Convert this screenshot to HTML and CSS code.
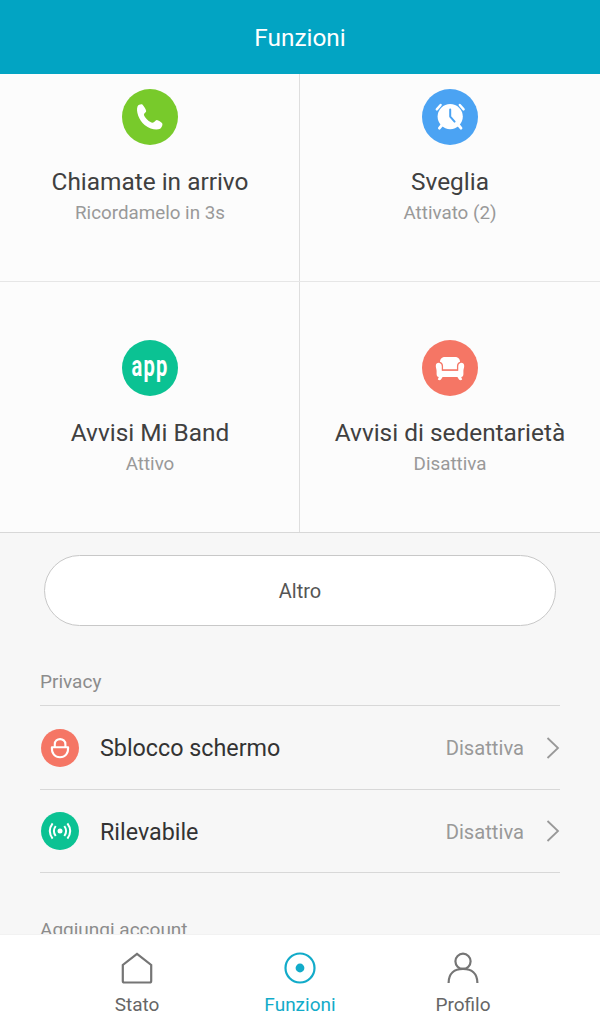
FILE: index.html
```html
<!DOCTYPE html>
<html lang="it">
<head>
    <meta charset="UTF-8">
    <meta name="viewport" content="width=device-width, initial-scale=1.0">
    <title>Funzioni</title>
    <link rel="stylesheet" href="styles.css">
</head>
<body>

    <header class="header">Funzioni</header>

    <main class="content">
        <div class="grid">
            <div class="cell cell-top">
                <svg class="cell-icon" viewBox="0 0 56 56">
                    <circle cx="28" cy="28" r="28" fill="#78ca2b"/>
                    <path d="M15.6 17.2 C16.6 15.6 19.6 14.8 20.6 15.8 C22.2 17.6 23.6 19.8 24.2 22 C24.3 23.2 21.8 24.4 21.9 25.8 C22.7 29 27.5 33.4 30.7 33.8 C32.2 33.8 33.3 31 34.8 31 C36.6 31.4 39 33 40.2 34.3 C41 35.6 39.8 38.8 38.2 39.7 C34.6 41.5 28.2 40.3 22.6 35.9 C17 31.1 13.6 22.1 15.6 17.2 Z" fill="#fff"/>
                </svg>
                <div class="cell-title">Chiamate in arrivo</div>
                <div class="cell-status">Ricordamelo in 3s</div>
            </div>
            <div class="cell cell-top">
                <svg class="cell-icon" viewBox="0 0 56 56">
                    <circle cx="28" cy="28" r="28" fill="#4ba3f3"/>
                    <g fill="none" stroke="#fff" stroke-linecap="round">
                        <path d="M14.8 20.4 L18.6 16 M41.6 20.4 L37.8 16" stroke-width="2.4"/>
                        <path d="M20 36 L17.4 39.2 M36.4 36 L39 39.2" stroke-width="2.8"/>
                    </g>
                    <circle cx="28.2" cy="27.6" r="12.6" fill="#fff"/>
                    <path d="M28.2 20.4 V27.6 L32.6 32.6" fill="none" stroke="#4ba3f3" stroke-width="2" stroke-linecap="round" stroke-linejoin="round"/>
                </svg>
                <div class="cell-title">Sveglia</div>
                <div class="cell-status">Attivato (2)</div>
            </div>
            <div class="cell">
                <svg class="cell-icon" viewBox="0 0 56 56">
                    <circle cx="28" cy="28" r="28" fill="#0bc293"/>
                    <text class="app-label" transform="translate(9.6 36) scale(0.67 1)">app</text>
                </svg>
                <div class="cell-title">Avvisi Mi Band</div>
                <div class="cell-status">Attivo</div>
            </div>
            <div class="cell">
                <svg class="cell-icon" viewBox="0 0 56 56">
                    <circle cx="28" cy="28" r="28" fill="#f57665"/>
                    <path d="M18 30 V22 C18 18.6 20.2 17 23 17 H33 C35.8 17 38 18.6 38 22 V30 Z" fill="#fff"/>
                    <path d="M13.8 26 C13.8 24 15 22.8 16.8 22.8 C18.8 22.8 20 24 20 26 V30.4 H36 V26 C36 24 37.2 22.8 39.2 22.8 C41 22.8 42.2 24 42.2 26 C42.2 28 41.4 29 41.4 31 V34 C41.4 35.8 40.6 37 39.2 37 L40.2 39.4 Q38.4 41 37 39.4 L35.4 37 H20.6 L19 39.4 Q17.6 41 15.8 39.4 L16.8 37 C15.4 37 14.6 35.8 14.6 34 V31 C14.6 29 13.8 28 13.8 26 Z" fill="#fff"/>
                    <path d="M17.6 22.4 C19.4 22.8 20.4 24.2 20.4 26 V30 H35.6 V26 C35.6 24.2 36.6 22.8 38.4 22.4" fill="none" stroke="#f57665" stroke-width="1.3"/>
                </svg>
                <div class="cell-title">Avvisi di sedentarietà</div>
                <div class="cell-status">Disattiva</div>
            </div>
        </div>

        <button class="more-btn" type="button">Altro</button>

        <section class="list">
            <div class="list-heading">Privacy</div>
            <div class="list-row">
                <svg class="row-icon" viewBox="0 0 38 38">
                    <circle cx="19" cy="19" r="19" fill="#f57665"/>
                    <path d="M10.9 18.2 H27.1 C27.6 24.6 24 28.2 19 28.2 C14 28.2 10.4 24.6 10.9 18.2 Z M13.8 18 V15.2 C13.8 8.4 24.4 8.4 24.4 15.2 V18" fill="none" stroke="#fff" stroke-width="2.1" stroke-linejoin="round"/>
                </svg>
                <span class="row-title">Sblocco schermo</span>
                <span class="row-status">Disattiva</span>
                <svg class="chevron" viewBox="0 0 14 22"><path d="M1.5 1 L12 11 L1.5 21"/></svg>
            </div>
            <div class="list-row">
                <svg class="row-icon" viewBox="0 0 38 38">
                    <circle cx="19" cy="19" r="19" fill="#0bc293"/>
                    <circle cx="19" cy="19" r="2.5" fill="#fff"/>
                    <path d="M14.7 14 Q11.1 19 14.7 24 M23.3 14 Q26.9 19 23.3 24 M11.6 11.4 Q6 19 11.6 26.6 M26.4 11.4 Q32 19 26.4 26.6" fill="none" stroke="#fff" stroke-width="2"/>
                </svg>
                <span class="row-title">Rilevabile</span>
                <span class="row-status">Disattiva</span>
                <svg class="chevron" viewBox="0 0 14 22"><path d="M1.5 1 L12 11 L1.5 21"/></svg>
            </div>
            <div class="list-heading">Aggiungi account</div>
        </section>
    </main>

    <nav class="tabs">
        <div class="tab">
            <svg class="tab-icon" viewBox="0 0 34 34"><path d="M17 2.9 L31.2 14 V30 Q31.2 31.5 29.7 31.5 H4.3 Q2.8 31.5 2.8 30 V14 Z"/></svg>
            <span>Stato</span>
        </div>
        <div class="tab tab-active">
            <svg class="tab-icon" viewBox="0 0 34 34"><circle cx="17" cy="17" r="14.5"/><circle class="dot" cx="17" cy="17" r="4.4"/></svg>
            <span>Funzioni</span>
        </div>
        <div class="tab">
            <svg class="tab-icon" viewBox="0 0 34 34"><circle cx="17" cy="10.3" r="7.6"/><path d="M2.6 32 C2.6 22.5 8.6 17.9 17 17.9 C25.4 17.9 31.4 22.5 31.4 32"/></svg>
            <span>Profilo</span>
        </div>
    </nav>

</body>
</html>
```
FILE: styles.css
```css
* {
    box-sizing: border-box;
}

body {
    margin: 0;
    height: 1025px;
    display: flex;
    flex-direction: column;
    font-family: Roboto, sans-serif;
    background-color: #f7f7f7;
    overflow: hidden;
}

svg {
    display: block;
    flex: none;
}

.header {
    flex: none;
    height: 74px;
    padding-top: 1px;
    line-height: 73px;
    text-align: center;
    font-size: 24.4px;
    color: #fff;
    background-color: #02a4c3;
}

.content {
    flex: 1;
    min-height: 0;
    overflow: hidden;
}

/* Feature tiles */
.grid {
    display: grid;
    grid-template-columns: 300px 300px;
    grid-template-rows: 208px 251px;
    background-color: #fcfcfc;
}

.cell {
    display: flex;
    flex-direction: column;
    align-items: center;
    padding-top: 58px;
    border-bottom: 1px solid #d8d8d8;
}

.cell-top {
    padding-top: 15px;
    border-bottom-color: #e6e6e6;
}

.cell:nth-child(odd) {
    box-shadow: inset -1px 0 #dedede;
}

.cell-icon {
    width: 56px;
    height: 56px;
}

.cell-title {
    margin-top: 21px;
    line-height: 32px;
    font-size: 24.4px;
    color: #404040;
}

.cell-status {
    margin-top: 2px;
    line-height: 26px;
    font-size: 18.8px;
    color: #999;
}

.app-label {
    font-size: 30px;
    font-weight: 700;
    letter-spacing: 1.8px;
    fill: #fff;
}

.more-btn {
    display: block;
    width: 512px;
    height: 71px;
    margin: 22px auto 0 44px;
    border: 1px solid #c8c8c8;
    border-radius: 36px;
    background-color: #fff;
    font-family: inherit;
    font-size: 20px;
    color: #555;
}

/* Settings list */
.list {
    padding: 31px 40px 0;
}

.list-heading {
    height: 48px;
    padding-top: 12px;
    line-height: 26px;
    font-size: 19px;
    color: #8c8c8c;
}

.list-row {
    display: flex;
    align-items: center;
    height: 83px;
    border-top: 1px solid #d8d8d8;
}

.list-heading + .list-row {
    height: 84px;
}

.list-row + .list-heading {
    height: 80px;
    padding-top: 44px;
    border-top: 1px solid #d8d8d8;
}

.row-icon {
    width: 38px;
    height: 38px;
    margin: 0 21px 0 1px;
}

.row-title {
    flex: 1;
    padding-top: 1px;
    font-size: 23.3px;
    color: #333;
}

.row-status {
    padding-top: 1px;
    font-size: 20.2px;
    color: #999;
}

.chevron {
    width: 14px;
    height: 22px;
    margin-left: 22px;
}

.chevron path {
    fill: none;
    stroke: #999;
    stroke-width: 1.8;
}

/* Bottom tabs */
.tabs {
    flex: none;
    display: flex;
    justify-content: center;
    height: 91px;
    padding-top: 16px;
    background-color: #fff;
    border-top: 1px solid #f2f2f2;
}

.tab {
    display: flex;
    flex-direction: column;
    align-items: center;
    width: 163px;
    line-height: 26px;
    font-size: 19px;
    color: #666;
}

.tab-icon {
    width: 34px;
    height: 34px;
    margin-bottom: 7px;
    fill: none;
    stroke: #757575;
    stroke-width: 2.2;
}

.tab-active {
    color: #12abc9;
}

.tab-active .tab-icon {
    stroke: #12abc9;
}

.tab-active .dot {
    fill: #12abc9;
    stroke: none;
}
```
